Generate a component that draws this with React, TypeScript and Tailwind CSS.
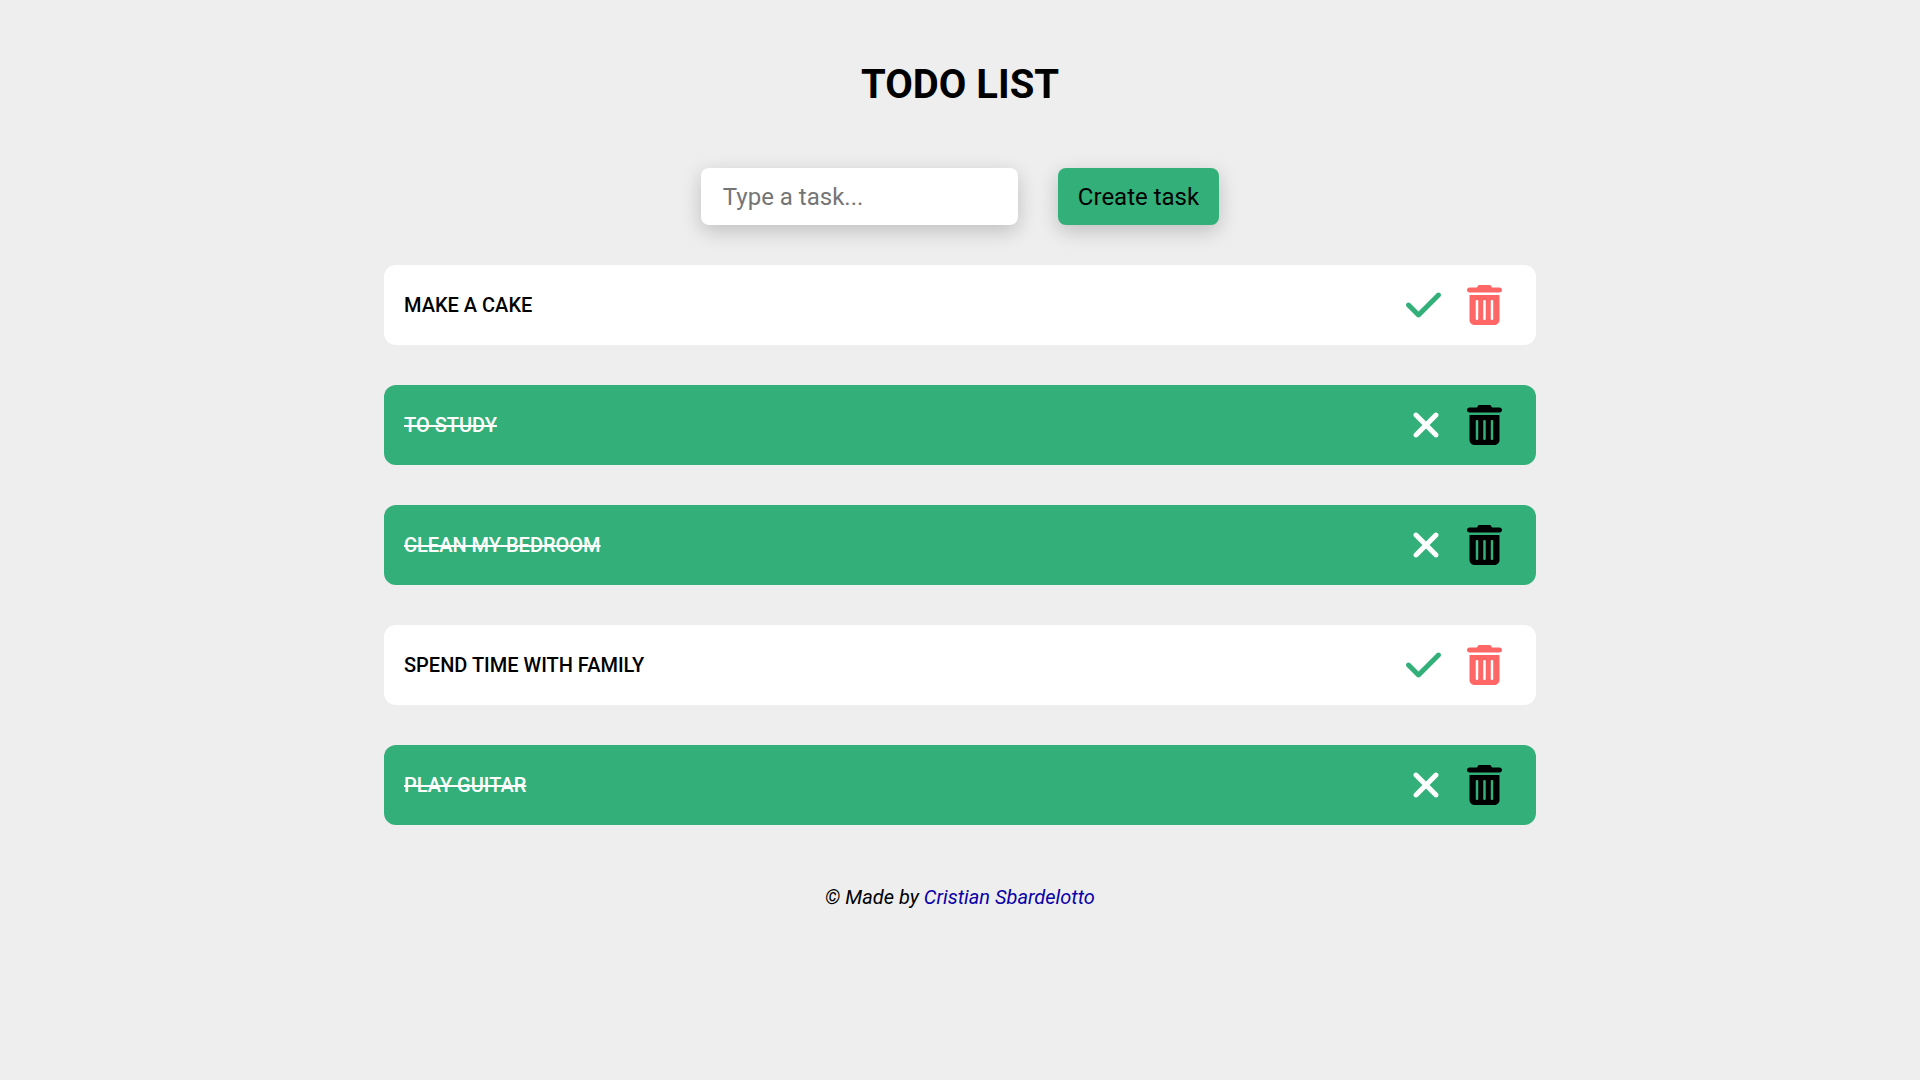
import { useState, type FormEvent } from "react";
import { FaCheck, FaTrashCan, FaXmark } from "react-icons/fa6";

type Task = { id: number; title: string; done: boolean };

const initialTasks: Task[] = [
  { id: 1, title: "Make a cake", done: false },
  { id: 2, title: "To study", done: true },
  { id: 3, title: "Clean my bedroom", done: true },
  { id: 4, title: "Spend time with family", done: false },
  { id: 5, title: "Play guitar", done: true },
];

type TaskRowProps = { task: Task; onToggle: () => void; onRemove: () => void };

function TaskRow({ task, onToggle, onRemove }: TaskRowProps) {
  return (
    <li
      className={`flex items-center justify-between rounded-xl py-5 pr-[34px] pl-5 ${
        task.done ? "bg-[#33b079] text-white" : "bg-white text-black"
      }`}
    >
      <span
        className={`text-[20px] leading-6 font-medium uppercase ${task.done ? "line-through decoration-2" : ""}`}
      >
        {task.title}
      </span>
      <div className="flex items-center gap-[26px]">
        <button
          type="button"
          onClick={onToggle}
          aria-label={task.done ? `Reopen ${task.title}` : `Complete ${task.title}`}
          className="cursor-pointer"
        >
          {task.done ? (
            <FaXmark className="h-10 w-[30px] text-white" />
          ) : (
            <FaCheck className="h-10 w-[35px] text-[#33b079]" />
          )}
        </button>
        <button type="button" onClick={onRemove} aria-label={`Delete ${task.title}`} className="cursor-pointer">
          <FaTrashCan className={`h-10 w-[35px] ${task.done ? "text-black" : "text-[#ff6666]"}`} />
        </button>
      </div>
    </li>
  );
}

export default function App() {
  const [tasks, setTasks] = useState(initialTasks);
  const [title, setTitle] = useState("");

  const createTask = (event: FormEvent) => {
    event.preventDefault();
    if (!title.trim()) return;
    setTasks([...tasks, { id: Date.now(), title, done: false }]);
    setTitle("");
  };

  return (
    <div className="flex min-h-screen flex-col items-center bg-[#eeeeee] pt-[60px] font-['Roboto',sans-serif] text-black">
      <h1 className="text-[40px] leading-[50px] font-bold">TODO LIST</h1>

      <form onSubmit={createTask} className="mt-[58px] flex flex-wrap justify-center gap-10">
        <input
          type="text"
          aria-label="Task"
          placeholder="Type a task..."
          value={title}
          onChange={(event) => setTitle(event.target.value)}
          className="w-[317px] rounded-lg bg-white px-[22px] pt-[15px] pb-[13px] text-2xl leading-[29px] shadow-[0_6px_20px_rgba(0,0,0,0.2)] outline-none placeholder:text-[#757575]"
        />
        <button
          type="submit"
          className="cursor-pointer rounded-lg bg-[#33b079] px-5 pt-[15px] pb-[13px] text-2xl leading-[29px] shadow-[0_6px_20px_rgba(0,0,0,0.2)]"
        >
          Create task
        </button>
      </form>

      <ul className="mt-10 flex w-3/5 flex-col gap-10">
        {tasks.map((task) => (
          <TaskRow
            key={task.id}
            task={task}
            onToggle={() => setTasks(tasks.map((t) => (t.id === task.id ? { ...t, done: !t.done } : t)))}
            onRemove={() => setTasks(tasks.filter((t) => t.id !== task.id))}
          />
        ))}
      </ul>

      <footer className="mt-[60px] text-[20px] leading-6 italic">
        © Made by{" "}
        <a href="#" className="text-[#0a00a8]">
          Cristian Sbardelotto
        </a>
      </footer>
    </div>
  );
}
